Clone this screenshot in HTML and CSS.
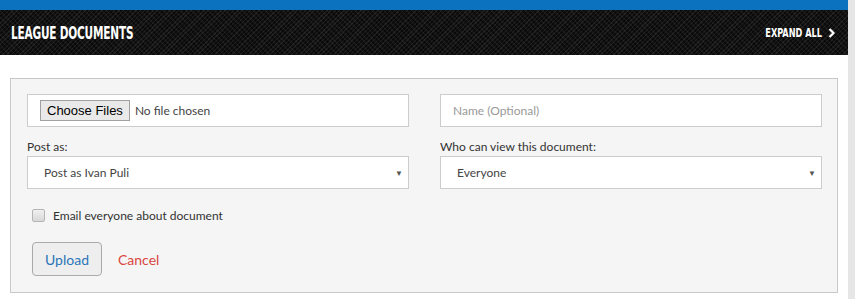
FILE: index.html
```html
<!DOCTYPE html>
<html lang="en">
<head>
  <meta charset="UTF-8">
  <title>League Documents</title>
  <link rel="stylesheet" href="styles.css">
</head>
<body>
  <div class="page">
    <div class="top-bar"></div>
    <div class="header">
      <h2 class="header-title">League Documents</h2>
      <a class="expand-all" href="#">
        <span class="expand-text">Expand All</span>
        <svg width="8" height="10" viewBox="0 0 8 10"><path d="M1.5 1 L5.5 5 L1.5 9" fill="none" stroke="#fff" stroke-width="2.2"/></svg>
      </a>
    </div>

    <div class="content">
      <form class="upload-panel" onsubmit="event.preventDefault()">
        <div class="form-grid">
          <div class="file-box">
            <span class="file-btn">Choose Files</span>
            <span class="file-text">No file chosen</span>
          </div>
          <input type="text" class="text-input" placeholder="Name (Optional)" />

          <div class="field">
            <label>Post as:</label>
            <div class="select-box">
              <span>Post as Ivan Puli</span>
              <span class="caret">&#9660;</span>
            </div>
          </div>
          <div class="field">
            <label>Who can view this document:</label>
            <div class="select-box">
              <span>Everyone</span>
              <span class="caret">&#9660;</span>
            </div>
          </div>
        </div>

        <label class="check-row">
          <span class="checkbox"></span>
          Email everyone about document
        </label>

        <div class="actions">
          <button type="submit" class="upload-btn">Upload</button>
          <a href="#" class="cancel-link">Cancel</a>
        </div>
      </form>
    </div>
  </div>
</body>
</html>
```

FILE: styles.css
```css
html, body {
  margin: 0;
  padding: 0;
  background-color: #fff;
}

body {
  font-family: 'Lato', 'Open Sans', sans-serif;
  font-size: 12px;
  color: #333;
}

.page {
  width: 848px;
  height: 299px;
  border-right: 7px solid #e6e6e6;
  overflow: hidden;
}

.top-bar {
  height: 10px;
  background-color: #0b72c0;
}

.header {
  height: 45px;
  display: flex;
  align-items: center;
  justify-content: space-between;
  padding: 0 12px 0 11px;
  background-color: #141414;
  background-image:
    repeating-linear-gradient(135deg, rgba(255,255,255,0.07) 0 1px, transparent 1px 3px),
    repeating-linear-gradient(45deg, rgba(0,0,0,0.5) 0 2px, transparent 2px 4px);
}

.header-title {
  margin: 0;
  color: #fff;
  font-family: 'DejaVu Sans Condensed', 'Liberation Sans', sans-serif;
  font-stretch: condensed;
  font-weight: bold;
  font-size: 17px;
  text-transform: uppercase;
  letter-spacing: -0.3px;
  transform: scaleX(0.69);
  transform-origin: left center;
  white-space: nowrap;
}

.expand-all {
  color: #fff;
  text-decoration: none;
  display: flex;
  align-items: center;
  gap: 6px;
}

.expand-text {
  font-family: 'DejaVu Sans Condensed', 'Liberation Sans', sans-serif;
  font-stretch: condensed;
  font-weight: bold;
  font-size: 13px;
  text-transform: uppercase;
  white-space: nowrap;
  transform: scaleX(0.7);
  transform-origin: right center;
}

.content {
  padding: 23px 10px 0 10px;
}

.upload-panel {
  background-color: #f5f5f5;
  border: 1px solid #c8c8c8;
  padding: 15px 16px 16px 16px;
  height: 182px;
}

.form-grid {
  display: grid;
  grid-template-columns: 382px 382px;
  column-gap: 31px;
  row-gap: 13px;
}

.file-box, .text-input, .select-box {
  height: 33px;
  box-sizing: border-box;
  background-color: #fff;
  border: 1px solid #ccc;
}

.file-box {
  display: flex;
  align-items: center;
  padding-left: 12px;
}

.file-btn {
  font-family: 'Liberation Sans', Arial, sans-serif;
  font-size: 13px;
  color: #000;
  background-color: #e9e9e9;
  border: 1px solid #a0a0a0;
  padding: 2px 6px;
  margin-right: 5px;
}

.file-text {
  color: #444;
}

.text-input {
  width: 100%;
  padding: 0 12px;
  font-family: inherit;
  font-size: 12px;
}

.text-input::placeholder {
  color: #999;
}

.field label {
  display: block;
  color: #333;
  margin-bottom: 3px;
  line-height: 13px;
}

.select-box {
  display: flex;
  align-items: center;
  justify-content: space-between;
  padding: 0 5px 0 16px;
  color: #444;
}

.caret {
  font-size: 8px;
  color: #555;
}

.check-row {
  display: flex;
  align-items: center;
  gap: 8px;
  margin-top: 19px;
  padding-left: 5px;
  color: #333;
}

.checkbox {
  width: 11px;
  height: 11px;
  border: 1px solid #b5b5b5;
  border-radius: 2px;
  background: linear-gradient(#f0f0f0, #d8d8d8);
}

.actions {
  display: flex;
  align-items: center;
  gap: 16px;
  margin-top: 19px;
  padding-left: 5px;
}

.upload-btn {
  height: 34px;
  width: 70px;
  background-color: #eee;
  border: 1px solid #aaa;
  border-radius: 4px;
  color: #2a75b8;
  font-family: inherit;
  font-size: 14px;
  cursor: pointer;
}

.cancel-link {
  color: #d9463e;
  text-decoration: none;
  font-size: 14px;
}
```
